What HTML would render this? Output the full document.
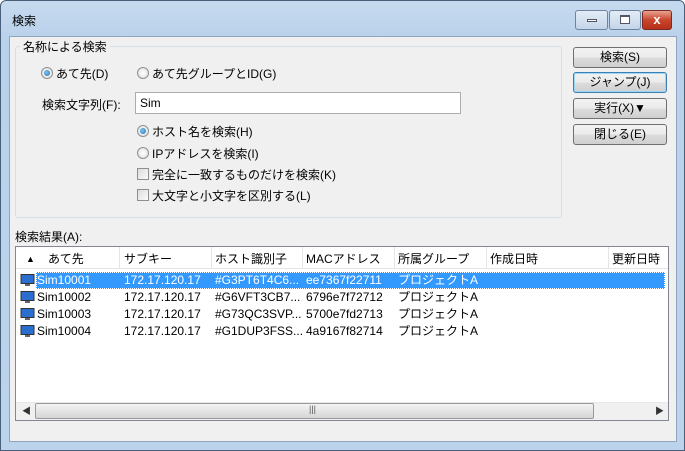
<!DOCTYPE html>
<html><head><meta charset="utf-8"><style>
*{margin:0;padding:0;box-sizing:border-box}
body{width:685px;height:451px;overflow:hidden;background:#fff;font-family:"Liberation Sans","Noto Sans CJK JP",sans-serif;font-size:12px;color:#000;position:relative}
.a{position:absolute;white-space:nowrap}
.frame{left:0;top:0;width:685px;height:451px;background:linear-gradient(#c6daef,#b9d1ea 40px,#bcd3ec);border:1px solid #4a5f7a;border-radius:6px 6px 0 0}
.client{left:9px;top:36px;width:668px;height:406px;background:#f0f0f0;border:1px solid #8ea4bf}
.btn{position:absolute;border:1px solid #707070;border-radius:3px;background:linear-gradient(#f2f2f2,#ebebeb 50%,#dddddd 51%,#cfcfcf);text-align:center;line-height:18px;font-size:12px}
.radio{position:absolute;width:12px;height:12px;border-radius:50%;border:1px solid #8f8f8f;background:radial-gradient(#fff,#ddd)}
.radio.on::after{content:"";position:absolute;left:2px;top:2px;width:6px;height:6px;border-radius:50%;background:radial-gradient(circle at 40% 40%,#7fc6f5,#1b6fb8)}
.chk{position:absolute;width:12px;height:12px;border:1px solid #8f8f8f;background:linear-gradient(135deg,#dcdcdc,#fafafa)}
.cap{position:absolute;top:10px;height:20px;border:1px solid #6d83a0;border-radius:3px;background:linear-gradient(#e3ecf6,#c4d5e9)}
.row{position:absolute;left:36px;width:620px;height:17px;line-height:17px;font-size:12px;white-space:nowrap}
.row span{position:absolute;white-space:nowrap}
.ico{position:absolute;left:20px;width:15px;height:13px}
</style></head><body>
<div class="a frame"></div>
<div class="a" style="left:12px;top:12px;font-size:12px">検索</div>
<div class="cap" style="left:575px;width:33px"><div style="position:absolute;left:11px;top:8px;width:10px;height:3px;background:#fff;border:1px solid #556"></div></div>
<div class="cap" style="left:609px;width:32px"><div style="position:absolute;left:10px;top:4px;width:10px;height:9px;border:1px solid #556;border-top-width:2px;background:#fff"></div></div>
<div class="cap" style="left:642px;width:30px;border-color:#7a2a1e;background:linear-gradient(#e8a290,#c9452d 50%,#b5301c)"><div style="position:absolute;left:0;top:0;width:28px;text-align:center;color:#fff;font-weight:bold;font-size:13px;line-height:17px">x</div></div>
<div class="a client"></div>

<div class="a" style="left:15px;top:46px;width:547px;height:172px;border:1px solid #d5dfe5;border-radius:3px"></div>
<div class="a" style="left:20px;top:38px;background:#f0f0f0;padding:0 3px">名称による検索</div>

<div class="radio on" style="left:41px;top:67px"></div><div class="a" style="left:56px;top:65px">あて先(D)</div>
<div class="radio" style="left:137px;top:67px"></div><div class="a" style="left:152px;top:65px">あて先グループとID(G)</div>
<div class="a" style="left:42px;top:96px">検索文字列(F):</div>
<div class="a" style="left:135px;top:92px;width:326px;height:22px;background:#fff;border:1px solid #abadb3;padding:3px 0 0 4px">Sim</div>
<div class="radio on" style="left:137px;top:125px"></div><div class="a" style="left:152px;top:123px">ホスト名を検索(H)</div>
<div class="radio" style="left:137px;top:147px"></div><div class="a" style="left:152px;top:145px">IPアドレスを検索(I)</div>
<div class="chk" style="left:137px;top:168px"></div><div class="a" style="left:152px;top:166px">完全に一致するものだけを検索(K)</div>
<div class="chk" style="left:137px;top:189px"></div><div class="a" style="left:152px;top:187px">大文字と小文字を区別する(L)</div>

<div class="btn" style="left:573px;top:47px;width:94px;height:21px">検索(S)</div>
<div class="btn" style="left:573px;top:72px;width:94px;height:21px;border-color:#3c7fb1;box-shadow:inset 0 0 0 1px #9fd5f5">ジャンプ(J)</div>
<div class="btn" style="left:573px;top:98px;width:94px;height:21px">実行(X)▼</div>
<div class="btn" style="left:573px;top:124px;width:94px;height:21px">閉じる(E)</div>

<div class="a" style="left:15px;top:228px">検索結果(A):</div>
<div class="a" style="left:15px;top:246px;width:654px;height:175px;background:#fff;border:1px solid #828790"></div>
<div class="a" style="left:16px;top:247px;width:652px;height:22px;background:#fff;border-bottom:1px solid #e5e5e5"></div>
<div class="a" style="left:14px;top:251px;width:650px;height:16px;font-size:12px;line-height:16px">
<span class="a" style="left:12px;font-size:9px">▲</span>
<span class="a" style="left:34px">あて先</span>
<span class="a" style="left:105px;top:-4px;height:22px;border-left:1px solid #e5e5e5"></span>
<span class="a" style="left:110px">サブキー</span>
<span class="a" style="left:197px;top:-4px;height:22px;border-left:1px solid #e5e5e5"></span>
<span class="a" style="left:201px">ホスト識別子</span>
<span class="a" style="left:288px;top:-4px;height:22px;border-left:1px solid #e5e5e5"></span>
<span class="a" style="left:292px">MACアドレス</span>
<span class="a" style="left:380px;top:-4px;height:22px;border-left:1px solid #e5e5e5"></span>
<span class="a" style="left:384px">所属グループ</span>
<span class="a" style="left:472px;top:-4px;height:22px;border-left:1px solid #e5e5e5"></span>
<span class="a" style="left:476px">作成日時</span>
<span class="a" style="left:594px;top:-4px;height:22px;border-left:1px solid #e5e5e5"></span>
<span class="a" style="left:598px">更新日時</span>
</div>

<div class="a" style="left:36px;top:272px;width:629px;height:17px;background:#3399ff;border:1px dotted #fff"></div>
<div class="row" style="top:272px;color:#fff"><span style="left:1px">Sim10001</span><span style="left:88px">172.17.120.17</span><span style="left:179px">#G3PT6T4C6...</span><span style="left:270px">ee7367f22711</span><span style="left:362px">プロジェクトA</span></div>
<div class="row" style="top:289px"><span style="left:1px">Sim10002</span><span style="left:88px">172.17.120.17</span><span style="left:179px">#G6VFT3CB7...</span><span style="left:270px">6796e7f72712</span><span style="left:362px">プロジェクトA</span></div>
<div class="row" style="top:306px"><span style="left:1px">Sim10003</span><span style="left:88px">172.17.120.17</span><span style="left:179px">#G73QC3SVP...</span><span style="left:270px">5700e7fd2713</span><span style="left:362px">プロジェクトA</span></div>
<div class="row" style="top:323px"><span style="left:1px">Sim10004</span><span style="left:88px">172.17.120.17</span><span style="left:179px">#G1DUP3FSS...</span><span style="left:270px">4a9167f82714</span><span style="left:362px">プロジェクトA</span></div>
<svg class="ico" style="top:274px" viewBox="0 0 15 13"><rect x="1" y="0.5" width="13" height="9" fill="#2a6fcf" stroke="#333"/><rect x="5" y="10" width="5" height="2" fill="#666"/></svg>
<svg class="ico" style="top:291px" viewBox="0 0 15 13"><rect x="1" y="0.5" width="13" height="9" fill="#2a6fcf" stroke="#333"/><rect x="5" y="10" width="5" height="2" fill="#666"/></svg>
<svg class="ico" style="top:308px" viewBox="0 0 15 13"><rect x="1" y="0.5" width="13" height="9" fill="#2a6fcf" stroke="#333"/><rect x="5" y="10" width="5" height="2" fill="#666"/></svg>
<svg class="ico" style="top:325px" viewBox="0 0 15 13"><rect x="1" y="0.5" width="13" height="9" fill="#2a6fcf" stroke="#333"/><rect x="5" y="10" width="5" height="2" fill="#666"/></svg>

<div class="a" style="left:16px;top:402px;width:652px;height:18px;background:#f0f0f0;border-top:1px solid #e8e8e8"></div>
<div class="a" style="left:22px;top:404px;font-size:9px;color:#333">◀</div>
<div class="a" style="left:655px;top:404px;font-size:9px;color:#333">▶</div>
<div class="a" style="left:35px;top:403px;width:559px;height:16px;border:1px solid #9a9a9a;border-radius:2px;background:linear-gradient(#f4f4f4,#e4e4e4 50%,#d6d6d6)"></div>
<div class="a" style="left:309px;top:404px;font-size:9px;color:#555">|||</div>
</body></html>
